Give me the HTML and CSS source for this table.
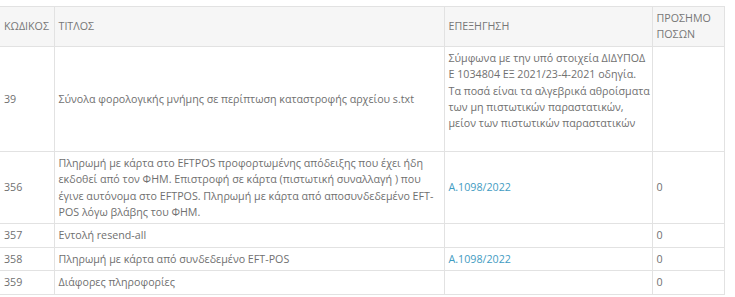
FILE: index.html
```html
<!DOCTYPE html>
<html lang="el">
<head>
<meta charset="utf-8">
<link rel="stylesheet" href="styles.css">
</head>
<body>
<table class="codes">
  <colgroup>
    <col class="c-code"><col class="c-title"><col class="c-note"><col class="c-sign">
  </colgroup>
  <thead>
    <tr><th>ΚΩΔΙΚΟΣ</th><th>ΤΙΤΛΟΣ</th><th>ΕΠΕΞΗΓΗΣΗ</th><th>ΠΡΟΣΗΜΟ ΠΟΣΩΝ</th></tr>
  </thead>
  <tbody>
    <tr>
      <td>39</td>
      <td>Σύνολα φορολογικής μνήμης σε περίπτωση καταστροφής αρχείου s.txt</td>
      <td class="note-cell"><div class="note">Σύμφωνα με την υπό στοιχεία ΔΙΔΥΠΟΔ<br>Ε 1034804 ΕΞ 2021/23-4-2021 οδηγία.<br>Τα ποσά είναι τα αλγεβρικά αθροίσματα<br>των μη πιστωτικών παραστατικών,<br>μείον των πιστωτικών παραστατικών</div></td>
      <td></td>
    </tr>
    <tr>
      <td>356</td>
      <td>Πληρωμή με κάρτα στο EFTPOS προφορτωμένης απόδειξης που έχει ήδη εκδοθεί από τον ΦΗΜ. Επιστροφή σε κάρτα (πιστωτική συναλλαγή ) που έγινε αυτόνομα στο EFTPOS. Πληρωμή με κάρτα από αποσυνδεδεμένο EFT-POS λόγω βλάβης του ΦΗΜ.</td>
      <td><a class="ref" href="#">Α.1098/2022</a></td>
      <td>0</td>
    </tr>
    <tr>
      <td>357</td>
      <td>Εντολή resend-all</td>
      <td></td>
      <td>0</td>
    </tr>
    <tr>
      <td>358</td>
      <td>Πληρωμή με κάρτα από συνδεδεμένο EFT-POS</td>
      <td><a class="ref" href="#">Α.1098/2022</a></td>
      <td>0</td>
    </tr>
    <tr>
      <td>359</td>
      <td>Διάφορες πληροφορίες</td>
      <td></td>
      <td>0</td>
    </tr>
  </tbody>
</table>
</body>
</html>
```
FILE: styles.css
```css
html, body {
  margin: 0;
  padding: 0;
  background: #ffffff;
}
body {
  padding-top: 6px;
  font-family: "Open Sans", "Noto Sans", sans-serif;
  font-size: 10.7px;
  line-height: 16.4px;
  color: #707070;
}
.codes {
  border-collapse: collapse;
  table-layout: fixed;
  width: 724px;
}
.c-code { width: 54px; }
.c-title { width: 390px; }
.c-note { width: 208px; }
.c-sign { width: 72px; }
.codes th,
.codes td {
  border: 1px solid #e2e2e2;
  padding: 3px 4px;
  text-align: left;
  vertical-align: middle;
  font-weight: normal;
}
.codes th:first-child,
.codes td:first-child {
  border-left: 0;
}
.codes thead th {
  background: #f6f6f6;
  color: #777777;
}
.note-cell {
  padding-right: 0;
}
.note {
  margin-bottom: 16px;
  white-space: nowrap;
}
.ref {
  color: #3f9cc2;
  text-decoration: none;
}
```
